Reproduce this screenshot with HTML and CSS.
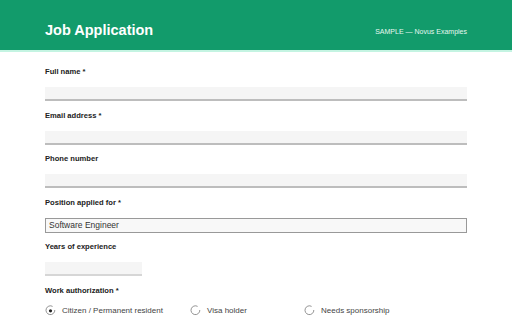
FILE: index.html
```html
<!DOCTYPE html>
<html lang="en">
<head>
    <meta charset="UTF-8">
    <meta name="viewport" content="width=device-width, initial-scale=1.0">
    <title>Job Application</title>
    <link rel="stylesheet" href="styles.css">
</head>
<body>
    <header class="header">
        <h1>Job Application</h1>
        <span class="sample">SAMPLE — Novus Examples</span>
    </header>

    <form class="form">
        <div class="field">
            <label for="full-name">Full name *</label>
            <input type="text" id="full-name" class="text-input">
        </div>

        <div class="field">
            <label for="email">Email address *</label>
            <input type="email" id="email" class="text-input">
        </div>

        <div class="field">
            <label for="phone">Phone number</label>
            <input type="tel" id="phone" class="text-input">
        </div>

        <div class="field">
            <label for="position">Position applied for *</label>
            <div class="select-box" id="position">Software Engineer</div>
        </div>

        <div class="field">
            <label for="years">Years of experience</label>
            <input type="number" id="years" class="text-input short">
        </div>

        <div class="field">
            <label>Work authorization *</label>
            <div class="radios">
                <div class="radio">
                    <svg width="11" height="11" viewBox="0 0 11 11">
                        <path d="M7.6 1.4 A4.4 4.4 0 1 0 9.8 5" fill="none" stroke="#888" stroke-width="0.9"/>
                        <circle cx="5.5" cy="5.8" r="1.6" fill="#222"/>
                    </svg>
                    <span>Citizen / Permanent resident</span>
                </div>
                <div class="radio">
                    <svg width="11" height="11" viewBox="0 0 11 11">
                        <path d="M7.6 1.4 A4.4 4.4 0 1 0 9.8 5" fill="none" stroke="#888" stroke-width="0.9"/>
                    </svg>
                    <span>Visa holder</span>
                </div>
                <div class="radio">
                    <svg width="11" height="11" viewBox="0 0 11 11">
                        <path d="M7.6 1.4 A4.4 4.4 0 1 0 9.8 5" fill="none" stroke="#888" stroke-width="0.9"/>
                    </svg>
                    <span>Needs sponsorship</span>
                </div>
            </div>
        </div>
    </form>
</body>
</html>
```

FILE: styles.css
```css
body {
    font-family: "Liberation Sans", Arial, sans-serif;
    margin: 0;
    padding: 0;
    background: #fff;
    color: #222;
}

.header {
    box-sizing: border-box;
    height: 52px;
    background-color: #129b6b;
    border-bottom: 2px solid #c4f4e2;
    display: flex;
    justify-content: space-between;
    align-items: center;
    padding: 10px 45px 0;
}

.header h1 {
    margin: 0;
    font-size: 14.5px;
    font-weight: bold;
    color: #fff;
}

.sample {
    font-size: 7px;
    color: #e6f7f0;
    margin-top: 3px;
}

.form {
    width: 422px;
    padding: 15px 45px 0;
}

.field {
    margin-bottom: 9.6px;
}

.field label {
    display: block;
    font-size: 7.6px;
    font-weight: bold;
    line-height: 10px;
    margin-bottom: 10px;
}

.text-input {
    display: block;
    box-sizing: border-box;
    width: 100%;
    height: 14px;
    margin: 0;
    padding: 0;
    border: none;
    border-bottom: 2px solid #bdbdbd;
    background: #f5f5f5;
}

.text-input.short {
    width: 97px;
    border-bottom-color: #d6d6d6;
}

.select-box {
    box-sizing: border-box;
    height: 15px;
    border: 1px solid #999;
    background: #f8f8f8;
    font-size: 8.5px;
    line-height: 13px;
    padding-left: 3px;
    color: #333;
}

.radios {
    display: grid;
    grid-template-columns: 145px 114px auto;
    margin-top: -1px;
}

.radio {
    display: flex;
    align-items: center;
    gap: 6px;
    font-size: 8px;
    color: #444;
}

.radio svg {
    flex-shrink: 0;
}
```
